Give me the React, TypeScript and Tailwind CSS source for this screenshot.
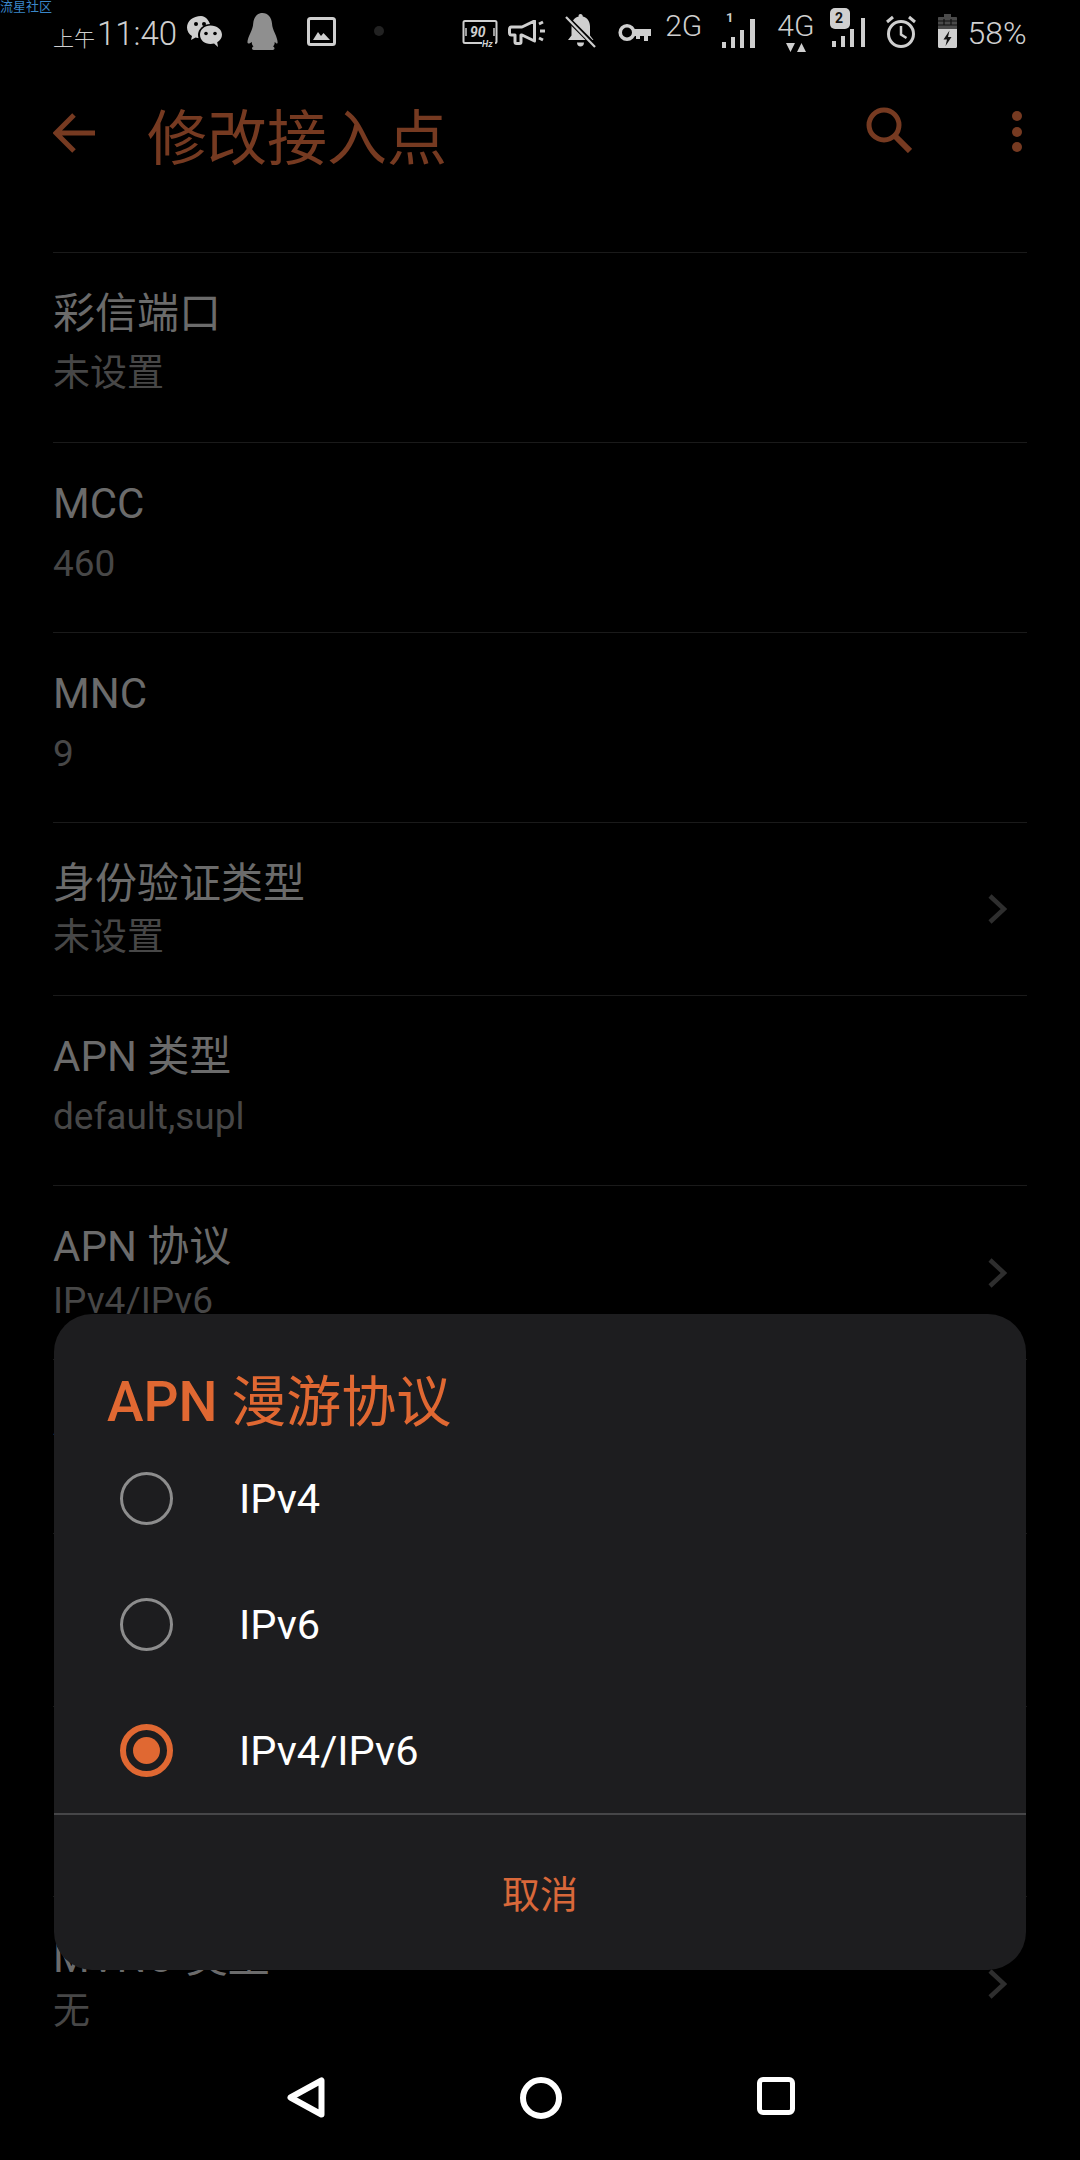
const FONT = "font-['Roboto','Noto_Sans_CJK_SC',sans-serif]";

function WeChatIcon() {
  return (
    <svg width="35" height="31" viewBox="0 0 35 31" className="mt-[16px] ml-[10px] shrink-0">
      <path d="M14 0C6 0 0 5 0 11.5c0 3.6 2 6.6 5 8.6L4 24l4.6-2.5c2 .6 4 .8 6 .6L24 12C23 5 19 0 14 0z" fill="#cfcfcf" />
      <ellipse cx="23.5" cy="19" rx="12.5" ry="11" fill="#000" />
      <path d="M23.5 9.5c-6 0-10.5 4-10.5 9.3s4.5 9.3 10.5 9.3c1.3 0 2.5-.2 3.6-.5L31 31l-.8-4.7c2.9-1.7 4.8-4.4 4.8-7.5 0-5.3-5.1-9.3-11.5-9.3z" fill="#cfcfcf" />
      <circle cx="9" cy="8" r="2" fill="#000" />
      <circle cx="17" cy="8" r="2" fill="#000" />
      <circle cx="19" cy="17.5" r="1.8" fill="#000" />
      <circle cx="28" cy="17.5" r="1.8" fill="#000" />
    </svg>
  );
}

function QQIcon() {
  return (
    <svg width="31" height="37" viewBox="0 0 31 37" className="mt-[13px] ml-[25px] shrink-0">
      <path d="M15.5 0C21 0 24.5 4.5 25 10.5c.2 3.5 1.2 6 3 10 1.8 4 3 8 2.5 9.5-.4 1.1-1.6.3-2.8-1.3.1 1.8-.3 3.4-1.7 4.8 1 .4 1.5 1.2 1.5 2 0 1-1.5 1.5-3 1.5H8c-1.6 0-3-.5-3-1.5 0-.8.5-1.6 1.5-2-1.4-1.4-1.8-3-1.7-4.8C3.6 30.3 1 31 .6 30 0 28 1.5 24 3.2 20.5c1.8-4 2.8-6.5 3-10C6.7 4.5 10 0 15.5 0z" fill="#8f8f8f" />
    </svg>
  );
}

function ImageIcon() {
  return (
    <svg width="29" height="29" viewBox="0 0 29 29" className="mt-[17px] ml-[29px] shrink-0">
      <rect x="1.5" y="1.5" width="26" height="26" rx="2" fill="none" stroke="#cfcfcf" strokeWidth="3" />
      <path d="M6 23l5-8 3 4 2.5-3 6.5 7z" fill="#cfcfcf" />
    </svg>
  );
}

function HzIcon() {
  return (
    <svg width="36" height="27" viewBox="0 0 36 27" className="mt-[20px] ml-[78px] shrink-0 overflow-visible">
      <path d="M30 23H3c-1 0-1.5-.5-1.5-1.5v-19C1.5 1.5 2 1 3 1h30c1 0 1.500.5 1.500 1.500v19c0 1-.5 1.500-1.500 1.500" fill="none" stroke="#cfcfcf" strokeWidth="2" />
      <path d="M4 8v8M32 8v8" stroke="#cfcfcf" strokeWidth="1.5" />
      <text x="8" y="17" fontSize="14" fontStyle="italic" fontWeight="700" fill="#cfcfcf" fontFamily="Roboto">90</text>
      <rect x="20" y="19" width="13" height="8" fill="#000" />
      <text x="20" y="27" fontSize="9" fontStyle="italic" fontWeight="700" fill="#cfcfcf" fontFamily="Roboto">Hz</text>
    </svg>
  );
}

function MegaphoneIcon() {
  return (
    <svg width="38" height="25" viewBox="0 0 38 25" className="mt-[20px] ml-[10px] shrink-0">
      <path d="M26.5 1L14 7H3.5C2 7 1.5 8 1.5 9v4c0 1 .5 2 2 2H7v7c0 1 .5 1.5 1.5 1.5h3c1 0 1.5-.5 1.5-1.5v-7h1l12.5 6z" fill="none" stroke="#cfcfcf" strokeWidth="3" strokeLinejoin="round" />
      <path d="M31 4l4-2M32 11h5M31 18l4 2" stroke="#cfcfcf" strokeWidth="3" />
    </svg>
  );
}

function BellOffIcon() {
  return (
    <svg width="31" height="35" viewBox="0 0 31 35" className="mt-[14px] ml-[19px] shrink-0">
      <path d="M15.5 0c1.4 0 2.3 1 2.3 2.5 4.5 1 7.2 5 7.2 10v9l3.5 4.5H3l3.5-4.5v-9c0-5 2.7-9 7.2-10C13.2 1 14.1 0 15.5 0z" fill="#cfcfcf" />
      <path d="M12 28.5h7c0 2.5-1.5 4-3.5 4s-3.500-1.500-3.500-4z" fill="#cfcfcf" />
      <path d="M0 2l31 31" stroke="#000" strokeWidth="5" />
      <path d="M1 3l29 30" stroke="#cfcfcf" strokeWidth="2.2" />
    </svg>
  );
}

function KeyIcon() {
  return (
    <svg width="33" height="19" viewBox="0 0 33 19" className="mt-[23px] ml-[22px] shrink-0">
      <circle cx="9" cy="9.5" r="6.8" fill="none" stroke="#cfcfcf" strokeWidth="3.6" />
      <path d="M15 6h18v7h-3v5h-4v-5h-4v3h-4v-3h-3z" fill="#cfcfcf" />
    </svg>
  );
}

function SignalBars({ label }: { label: "1" | "2" }) {
  const isSim1 = label === "1";
  return (
    <svg width="36" height="42" viewBox="0 0 36 42" className="shrink-0">
      {isSim1 ? (
        <>
          <text x="4" y="13" fontSize="13" fontWeight="700" fill="#cfcfcf" fontFamily="Roboto">1</text>
          <rect x="0" y="33" width="4" height="6" fill="#cfcfcf" />
          <rect x="9" y="28" width="4" height="11" fill="#cfcfcf" />
          <rect x="18" y="21" width="4" height="18" fill="#cfcfcf" />
          <rect x="28" y="10" width="5" height="29" fill="#cfcfcf" />
        </>
      ) : (
        <>
          <rect x="0" y="0" width="20" height="21" rx="5" fill="#cfcfcf" />
          <text x="5" y="15" fontSize="14" fontWeight="700" fill="#111" fontFamily="Roboto">2</text>
          <rect x="2" y="33" width="4" height="6" fill="#cfcfcf" />
          <rect x="11" y="28" width="4" height="11" fill="#cfcfcf" />
          <rect x="20" y="21" width="4" height="18" fill="#cfcfcf" />
          <rect x="31" y="10" width="4" height="29" fill="#cfcfcf" />
        </>
      )}
    </svg>
  );
}

function AlarmIcon() {
  return (
    <svg width="32" height="34" viewBox="0 0 32 34" className="mt-[15px] ml-[19px] shrink-0">
      <circle cx="16" cy="19" r="12.5" fill="none" stroke="#cfcfcf" strokeWidth="3" />
      <path d="M16 11v8.5l5.5 3.5" fill="none" stroke="#cfcfcf" strokeWidth="2.5" />
      <path d="M2 7l6-5M30 7l-6-5" stroke="#cfcfcf" strokeWidth="3" />
    </svg>
  );
}

function BatteryIcon() {
  return (
    <svg width="19" height="34" viewBox="0 0 19 34" className="mt-[14px] ml-[21px] shrink-0">
      <path d="M6 0h7v3h5c.6 0 1 .4 1 1v11H0V4c0-.6.4-1 1-1h5z" fill="#4a4a4a" />
      <path d="M0 15h19v17.5c0 .9-.6 1.5-1.500 1.500h-16C.6 34 0 33.4 0 32.5z" fill="#cfcfcf" />
      <path d="M0 7h19M0 11h19M6 5v6M13 5v6" stroke="#111" strokeWidth="1.2" />
      <path d="M11.5 16.5L5.5 25.5h3.5l-1.5 6.500 6-9h-3.500z" fill="#111" />
    </svg>
  );
}

function StatusBar() {
  return (
    <div className="flex h-[70px] items-start pl-[53px] text-[#cfcfcf]">
      <span className="mt-[25px] text-[21px] leading-[28px] font-light">上午</span>
      <span className="mt-[13px] ml-[2px] text-[33px] leading-[42px] font-light">11:40</span>
      <WeChatIcon />
      <QQIcon />
      <ImageIcon />
      <div className="mt-[26px] ml-[38px] h-[10px] w-[10px] shrink-0 rounded-full bg-[#222222]" />
      <HzIcon />
      <MegaphoneIcon />
      <BellOffIcon />
      <KeyIcon />
      <span className="mt-[10px] ml-[14px] text-[30px] leading-[32px] font-light">2G</span>
      <div className="mt-[9px] ml-[20px] shrink-0">
        <SignalBars label="1" />
      </div>
      <div className="mt-[10px] ml-[19px] flex flex-col items-center">
        <span className="text-[30px] leading-[32px] font-light">4G</span>
        <svg width="20" height="9" viewBox="0 0 20 9" className="mt-[1px]">
          <path d="M0 0h9L4.5 9zM11 9h9l-4.5-9z" fill="#cfcfcf" />
        </svg>
      </div>
      <div className="mt-[8px] ml-[15px] shrink-0">
        <SignalBars label="2" />
      </div>
      <AlarmIcon />
      <BatteryIcon />
      <span className="mt-[14px] ml-[11px] text-[32px] leading-[38px] font-light">58%</span>
    </div>
  );
}

function Toolbar() {
  return (
    <div className="flex h-[134px] items-center text-[#763a21]">
      <svg width="42" height="40" viewBox="0 0 42 40" className="mb-[8px] ml-[53px] shrink-0">
        <path d="M42 20H4M21 2L3 20l18 18" fill="none" stroke="currentColor" strokeWidth="5" />
      </svg>
      <h1 className="mt-[5px] ml-[52px] text-[60px] leading-[72px] font-normal">修改接入点</h1>
      <svg width="46" height="46" viewBox="0 0 46 46" className="mb-[14px] ml-[419px] shrink-0">
        <circle cx="18" cy="18" r="15" fill="none" stroke="currentColor" strokeWidth="5" />
        <path d="M28.5 28.5L44 44" fill="none" stroke="currentColor" strokeWidth="6" />
      </svg>
      <div className="mb-[11px] ml-[100px] flex flex-col gap-[5.5px]">
        <div className="h-[10px] w-[10px] rounded-full bg-[#763a21]" />
        <div className="h-[10px] w-[10px] rounded-full bg-[#763a21]" />
        <div className="h-[10px] w-[10px] rounded-full bg-[#763a21]" />
      </div>
    </div>
  );
}

type RowData = {
  title: string;
  value: string;
  picker?: boolean;
  height: string;
};

// row heights are not uniform: the picker rows are a bit shorter
const rows: RowData[] = [
  { title: "彩信端口", value: "未设置", height: "h-[190px]" },
  { title: "MCC", value: "460", height: "h-[190px]" },
  { title: "MNC", value: "9", height: "h-[190px]" },
  { title: "身份验证类型", value: "未设置", picker: true, height: "h-[173px]" },
  { title: "APN 类型", value: "default,supl", height: "h-[190px]" },
  { title: "APN 协议", value: "IPv4/IPv6", picker: true, height: "h-[174px]" },
  { title: "APN 漫游协议", value: "IPv4/IPv6", picker: true, height: "h-[174px]" },
  { title: "承载系统", value: "未指定", picker: true, height: "h-[173px]" },
  { title: "MVNO 值", value: "未设置", height: "h-[190px]" },
  { title: "MVNO 类型", value: "无", picker: true, height: "h-[174px]" },
];

function SettingRow({ title, value, picker, height }: RowData) {
  return (
    <div className={`relative border-t border-[#1a1a1a] pt-[37px] ${height}`}>
      <div className="text-[42px] leading-[48px] text-[#6b6b6b]">{title}</div>
      <div
        className={`text-[37px] leading-[44px] text-[#474747] ${picker ? "mt-[8px]" : "mt-[14px]"}`}
      >
        {value}
      </div>
      {picker && (
        <svg
          width="19"
          height="30"
          viewBox="0 0 19 30"
          className="absolute top-1/2 right-[20px] -translate-y-1/2"
        >
          <path d="M2 2l14 13L2 28" fill="none" stroke="#2e2e2e" strokeWidth="4.5" />
        </svg>
      )}
    </div>
  );
}

function RadioOption({ label, checked }: { label: string; checked?: boolean }) {
  return (
    <div className="flex h-[126px] items-center pl-[66px]">
      {checked ? (
        <div className="flex h-[53px] w-[53px] items-center justify-center rounded-full border-[6px] border-[#e06832]">
          <div className="h-[27px] w-[27px] rounded-full bg-[#e06832]" />
        </div>
      ) : (
        <div className="h-[53px] w-[53px] rounded-full border-[3px] border-[#8d8d8d]" />
      )}
      <span className="mt-[2px] ml-[66px] text-[41.5px] leading-[48px] text-white">{label}</span>
    </div>
  );
}

function ProtocolDialog() {
  return (
    <div className="absolute top-[1314px] left-[54px] flex h-[656px] w-[972px] flex-col rounded-[38px] bg-[#1d1d1f]">
      <div className="h-[121px] pt-[56px] pl-[53px] text-[55px] leading-[64px] text-[#e06832]">
        <span className="font-medium">APN</span> 漫游协议
      </div>
      <RadioOption label="IPv4" />
      <RadioOption label="IPv6" />
      <RadioOption label="IPv4/IPv6" checked />
      <div className="h-[2px] bg-[#464648]" />
      <div className="flex flex-1 items-center justify-center pt-[4px] text-[38px] leading-[44px] text-[#d9683a]">
        取消
      </div>
    </div>
  );
}

function NavBar() {
  return (
    <div className="absolute bottom-0 left-0 flex h-[90px] w-full items-start bg-black pt-[7px] pl-[287px]">
      <svg width="38" height="41" viewBox="0 0 38 41">
        <path d="M34.5 3.5v34L3.5 20.5z" fill="none" stroke="#fff" strokeWidth="6" strokeLinejoin="round" />
      </svg>
      <div className="ml-[195px] h-[42px] w-[42px] rounded-full border-[6px] border-white" />
      <div className="ml-[195px] h-[38px] w-[38px] rounded-[6px] border-[5px] border-white" />
    </div>
  );
}

export default function App() {
  return (
    <div className={`relative h-[2160px] w-[1080px] overflow-hidden bg-black ${FONT}`}>
      <span className="absolute top-0 left-0 text-[13px] leading-[13px] text-[#3a86c8]">流星社区</span>
      <StatusBar />
      <Toolbar />
      <div className="mx-[53px] mt-[48px]">
        {rows.map((row) => (
          <SettingRow key={row.title} {...row} />
        ))}
      </div>
      <ProtocolDialog />
      <NavBar />
    </div>
  );
}
